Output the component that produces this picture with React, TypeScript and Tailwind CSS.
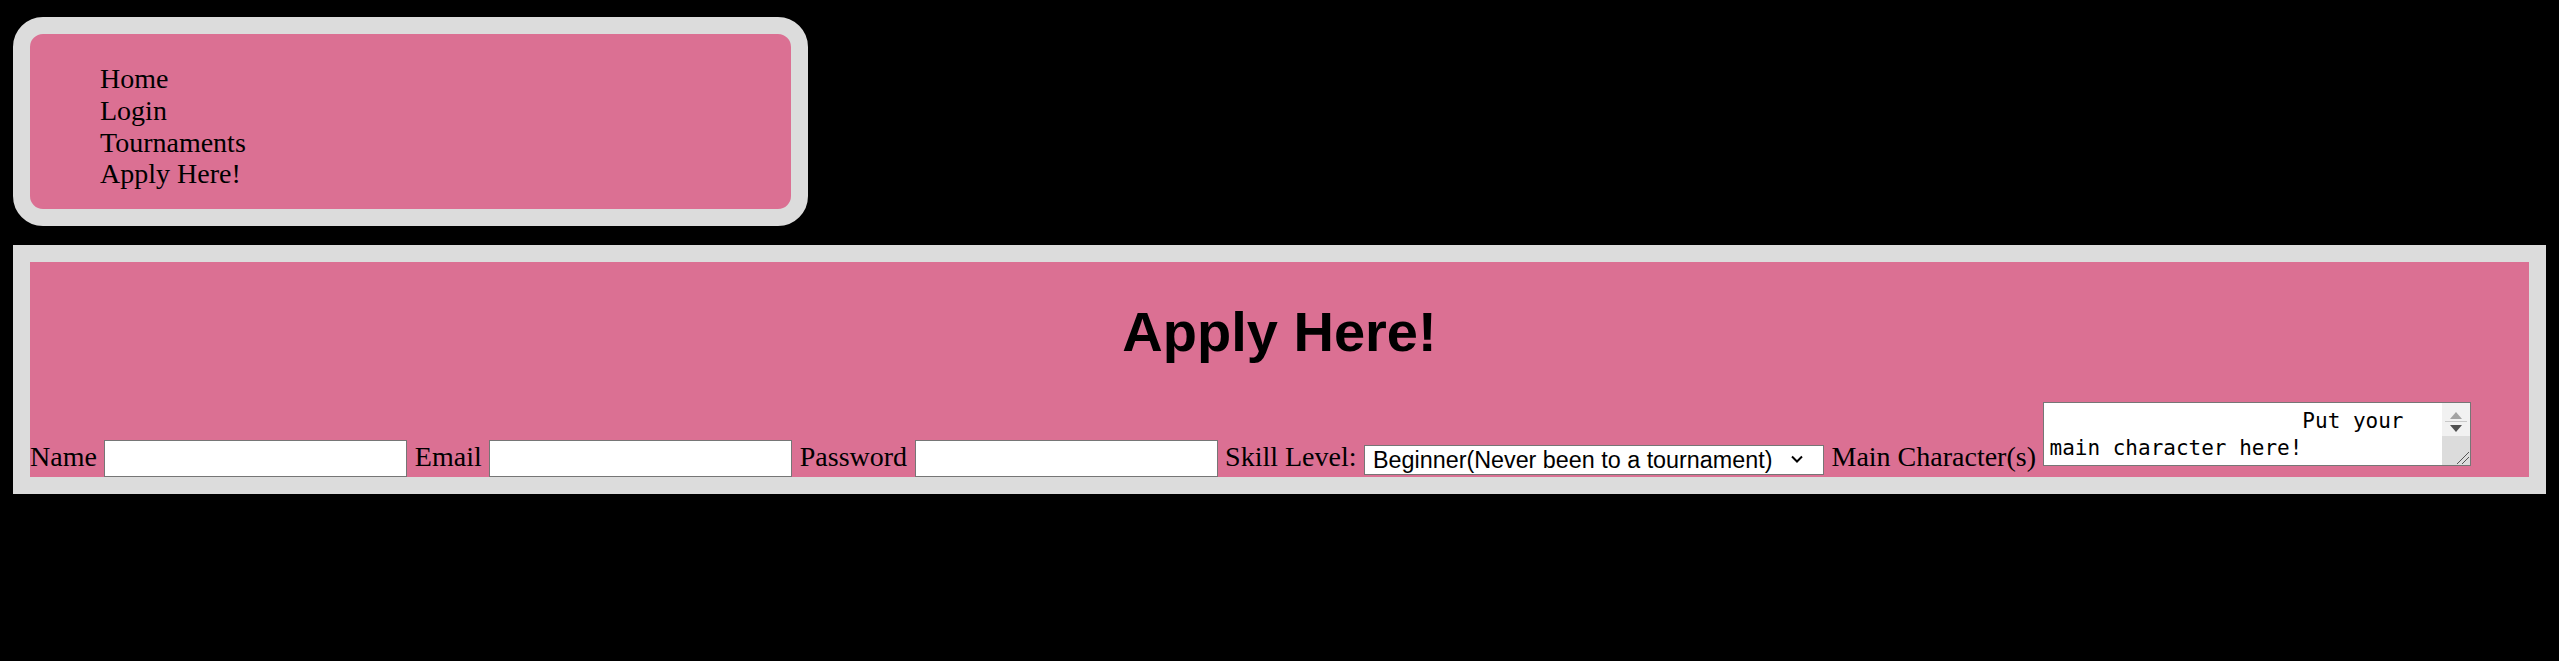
import React from "react";

export default function App() {
  const serif = { fontFamily: '"Liberation Serif", "Times New Roman", serif' };
  return (
    <div
      className="min-h-screen bg-black px-[13px] pt-[17px] text-black"
      style={serif}
    >
      <nav className="w-[795px] rounded-[30px] border-[17px] border-[#dcdcdc] bg-[#db7093]">
        <ul className="pl-[70px] pt-[29px] pb-[19px] text-[28px] leading-[31.75px]">
          <li>Home</li>
          <li>Login</li>
          <li>Tournaments</li>
          <li>Apply Here!</li>
        </ul>
      </nav>

      <section className="mt-[19px] border-[17px] border-[#dcdcdc] bg-[#db7093]">
        <h1
          className="mt-[38px] mb-[37.5px] text-center text-[56px] font-bold leading-[64.4px]"
          style={{ fontFamily: '"Liberation Sans", Arial, sans-serif' }}
        >
          Apply Here!
        </h1>
        <form className="flex items-end gap-[7.5px] text-[28px] leading-[32px]">
          <label className="mb-[4px]">Name</label>
          <input
            type="text"
            className="mb-[0.5px] h-[37px] w-[303px] border border-[#767676] bg-white"
          />
          <label className="mb-[4px]">Email</label>
          <input
            type="text"
            className="mb-[0.5px] h-[37px] w-[303px] border border-[#767676] bg-white"
          />
          <label className="mb-[4px]">Password</label>
          <input
            type="password"
            className="mb-[0.5px] h-[37px] w-[303px] border border-[#767676] bg-white"
          />
          <label className="mb-[4px]">Skill Level:</label>
          <div className="relative mb-[4.5px] h-[30px] w-[460px]">
            <select
              className="h-full w-full appearance-none border border-[#767676] bg-white pl-[8px] text-[23.33px] leading-[28px] text-black"
              style={{ fontFamily: '"Liberation Sans", Arial, sans-serif' }}
              defaultValue="b"
            >
              <option value="b">Beginner(Never been to a tournament)</option>
            </select>
            <svg
              className="pointer-events-none absolute right-[21px] top-[12px]"
              width="12"
              height="8"
              viewBox="0 0 12 8"
            >
              <polyline
                points="1,1.5 6,6.5 11,1.5"
                fill="none"
                stroke="#000"
                strokeWidth="2"
              />
            </svg>
          </div>
          <label className="mb-[4px]">Main Character(s)</label>
          <div className="mb-[11.5px] flex h-[64px] w-[428px] border border-[#767676] bg-white">
            <textarea
              className="flex-1 resize-none overflow-hidden px-[5px] pt-[5px] text-[21px] leading-[26.6px] text-black outline-none"
              style={{ fontFamily: '"DejaVu Sans Mono", monospace' }}
              defaultValue={"                    Put your main character here!"}
            />
            <div className="flex w-[28px] flex-col bg-[#f1f1f1]">
              <div className="flex h-[16px] items-end justify-center">
                <svg width="12" height="7" viewBox="0 0 12 7">
                  <polygon points="0,7 6,0 12,7" fill="#a3a3a3" />
                </svg>
              </div>
              <div className="mx-[3px] mt-[2px] h-px bg-[#c8c8c8]" />
              <div className="flex h-[14px] items-center justify-center">
                <svg width="12" height="7" viewBox="0 0 12 7">
                  <polygon points="0,0 12,0 6,7" fill="#505050" />
                </svg>
              </div>
              <div className="relative flex-1 bg-[#dcdcdc]">
                <svg
                  className="absolute bottom-[1px] right-[1px]"
                  width="14"
                  height="14"
                  viewBox="0 0 14 14"
                >
                  <line x1="2" y1="14" x2="14" y2="2" stroke="#555" strokeWidth="1" />
                  <line x1="7" y1="14" x2="14" y2="7" stroke="#555" strokeWidth="1" />
                </svg>
              </div>
            </div>
          </div>
        </form>
      </section>
    </div>
  );
}
